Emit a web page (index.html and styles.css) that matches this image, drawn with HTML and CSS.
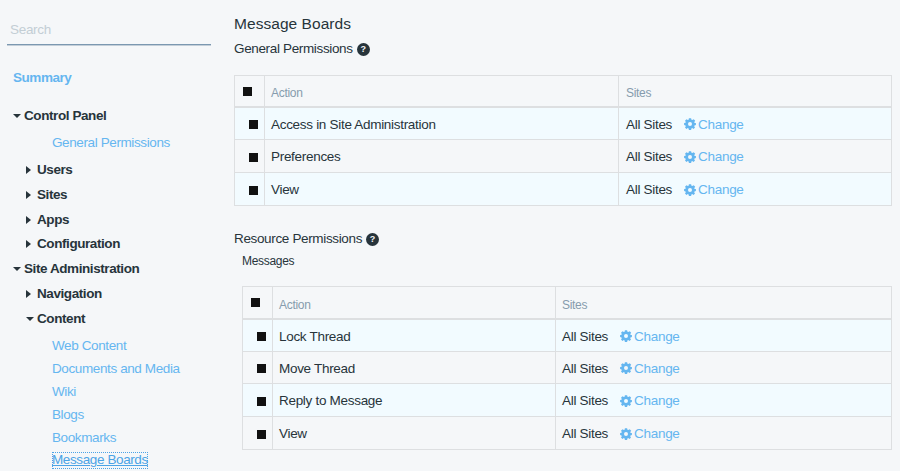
FILE: index.html
```html
<!DOCTYPE html>
<html lang="en">
<head>
<meta charset="utf-8">
<title>Message Boards</title>
<link rel="stylesheet" href="styles.css">
</head>
<body>
<svg class="defs" width="0" height="0" aria-hidden="true">
  <symbol id="gear" viewBox="0 0 12 12"><path fill-rule="evenodd" d="M4.9.2h2.2l.4 1.6.8.3L9.700 1.300l1.500 1.500-.9 1.300.3.800 1.300.2v2l-1.400.3-.3.800.8 1.300-1.500 1.500-1.300-.9-.8.300-.3 1.600H4.900l-.3-1.600-.8-.3-1.300.9L1 9.500l.8-1.300-.3-.8-1.400-.3v-2l1.400-.3.3-.8L1 2.700l1.500-1.500 1.400.9.700-.3zM6 4a2 2 0 1 0 0 4 2 2 0 0 0 0-4z"/></symbol>
</svg>
<div class="page">
  <aside class="sidebar">
    <input class="search" type="text" placeholder="Search">
    <nav class="tree">
      <a class="summary">Summary</a>
      <div class="node first"><i class="down"></i>Control Panel</div>
      <a class="leaf single"><span>General Permissions</span></a>
      <div class="node sub"><i class="right"></i>Users</div>
      <div class="node sub"><i class="right"></i>Sites</div>
      <div class="node sub"><i class="right"></i>Apps</div>
      <div class="node sub"><i class="right"></i>Configuration</div>
      <div class="node"><i class="down"></i>Site Administration</div>
      <div class="node sub"><i class="right"></i>Navigation</div>
      <div class="node sub"><i class="down"></i>Content</div>
      <div class="leaves">
        <a class="leaf"><span>Web Content</span></a>
        <a class="leaf"><span>Documents and Media</span></a>
        <a class="leaf"><span>Wiki</span></a>
        <a class="leaf"><span>Blogs</span></a>
        <a class="leaf"><span>Bookmarks</span></a>
        <a class="leaf active"><span>Message Boards</span></a>
      </div>
    </nav>
  </aside>
  <main class="content">
    <h1>Message Boards</h1>
    <h2>General Permissions <b class="help">?</b></h2>
    <div class="table general">
      <div class="row head"><div class="cell check"><i class="box"></i></div><div class="cell">Action</div><div class="cell">Sites</div></div>
      <div class="row alt short"><div class="cell check"><i class="box"></i></div><div class="cell">Access in Site Administration</div><div class="cell">All Sites<a class="change"><svg class="gear"><use href="#gear"/></svg>Change</a></div></div>
      <div class="row"><div class="cell check"><i class="box"></i></div><div class="cell">Preferences</div><div class="cell">All Sites<a class="change"><svg class="gear"><use href="#gear"/></svg>Change</a></div></div>
      <div class="row alt"><div class="cell check"><i class="box"></i></div><div class="cell">View</div><div class="cell">All Sites<a class="change"><svg class="gear"><use href="#gear"/></svg>Change</a></div></div>
    </div>
    <h2 class="resource">Resource Permissions <b class="help">?</b></h2>
    <h3>Messages</h3>
    <div class="table messages">
      <div class="row head"><div class="cell check"><i class="box"></i></div><div class="cell">Action</div><div class="cell">Sites</div></div>
      <div class="row alt short"><div class="cell check"><i class="box"></i></div><div class="cell">Lock Thread</div><div class="cell">All Sites<a class="change"><svg class="gear"><use href="#gear"/></svg>Change</a></div></div>
      <div class="row short"><div class="cell check"><i class="box"></i></div><div class="cell">Move Thread</div><div class="cell">All Sites<a class="change"><svg class="gear"><use href="#gear"/></svg>Change</a></div></div>
      <div class="row alt"><div class="cell check"><i class="box"></i></div><div class="cell">Reply to Message</div><div class="cell">All Sites<a class="change"><svg class="gear"><use href="#gear"/></svg>Change</a></div></div>
      <div class="row"><div class="cell check"><i class="box"></i></div><div class="cell">View</div><div class="cell">All Sites<a class="change"><svg class="gear"><use href="#gear"/></svg>Change</a></div></div>
    </div>
  </main>
</div>
</body>
</html>
```
FILE: styles.css
```css
* { box-sizing: border-box; }
body {
  margin: 0;
  background: #f5f7f9;
  color: #27343b;
  font: 13.5px/16px "Liberation Sans", Arial, sans-serif;
  letter-spacing: -.3px;
  overflow: hidden;
}
.defs { display: block; }
.page { display: flex; height: 471px; }
.sidebar { width: 234px; padding: 15px 23px 0 7px; }
.search {
  display: block;
  width: 203.5px;
  height: 30px;
  padding: 0 3px;
  border: 0;
  border-bottom: 1px solid #7b98b1;
  box-shadow: 0 1px #c3ced8;
  background: transparent;
  font: inherit;
  letter-spacing: -.3px;
}
.search::placeholder { color: #c3ced5; opacity: 1; }
a { color: #65b6f0; }
.tree { padding-left: 6px; }
.summary { display: block; margin-top: 25px; font-weight: bold; letter-spacing: -.45px; }
.node { display: flex; align-items: center; height: 24.75px; font-weight: bold; letter-spacing: -.42px; white-space: nowrap; }
.node.first { margin-top: 17.5px; }
.node i { width: 11px; flex: none; }
.node i::before { content: ""; display: block; border: 4px solid transparent; width: 0; }
.node .down::before { border-top-color: #27343b; border-bottom: 0; }
.sub { padding-left: 13px; }
.node .right::before { border-left: 5px solid #27343b; border-right: 0; }
.leaf { display: flex; align-items: center; height: 22.9px; padding-left: 39px; letter-spacing: -.39px; }
.leaf.single { height: 29.5px; }
.leaves { padding-top: 4px; }
.active span { color: #4ba3e6; text-decoration: underline; outline: 1px dotted #4ba3e6; outline-offset: -1px; padding-bottom: 1px; }
.content { width: 658px; padding-top: 14px; }
h1, h2, h3 { margin: 0; font-weight: normal; }
h1 { font-size: 15.5px; line-height: 20px; letter-spacing: .05px; }
h2 { display: flex; align-items: center; gap: 4px; height: 16px; margin-top: 7px; font-size: 13.5px; letter-spacing: -.35px; }
.help {
  width: 13px;
  height: 13px;
  border-radius: 50%;
  background: #27343b;
  color: #f5f7f9;
  font-size: 9px;
  line-height: 13px;
  letter-spacing: 0;
  text-align: center;
}
.table { border: 1px solid #dddfe1; border-bottom: 0; }
.general { margin-top: 18px; }
.resource { margin-top: 25px; }
h3 { margin: 6px 0 0 8px; font-size: 12px; line-height: 16px; letter-spacing: -.3px; }
.messages { margin: 17px 0 0 8px; }
.row { display: grid; height: 33px; border-bottom: 1px solid #dddfe1; }
.general .row { grid-template-columns: 29px 354px 1fr; }
.messages .row { grid-template-columns: 29px 283px 1fr; }
.row.short { height: 32px; }
.row.alt { background: #f2fbff; }
.row.head { height: 32px; border-bottom-width: 2px; color: #869cad; font-size: 12px; letter-spacing: -.3px; }
.messages .row.head { height: 33px; }
.cell { display: flex; align-items: center; padding: 2px 0 0 6px; border-left: 1px solid #dddfe1; }
.cell.check { border-left: 0; padding-left: 14px; }
.head .cell { padding-top: 4px; }
.head .cell.check { padding: 0 0 0 8px; }
.box { width: 9px; height: 9px; background: #111; }
.change { display: flex; align-items: center; margin-left: 12px; }
.general .cell:last-child { padding-left: 7px; }
.gear { width: 12px; height: 12px; margin: -1px 2px 0 0; fill: #65b6f0; }
```
